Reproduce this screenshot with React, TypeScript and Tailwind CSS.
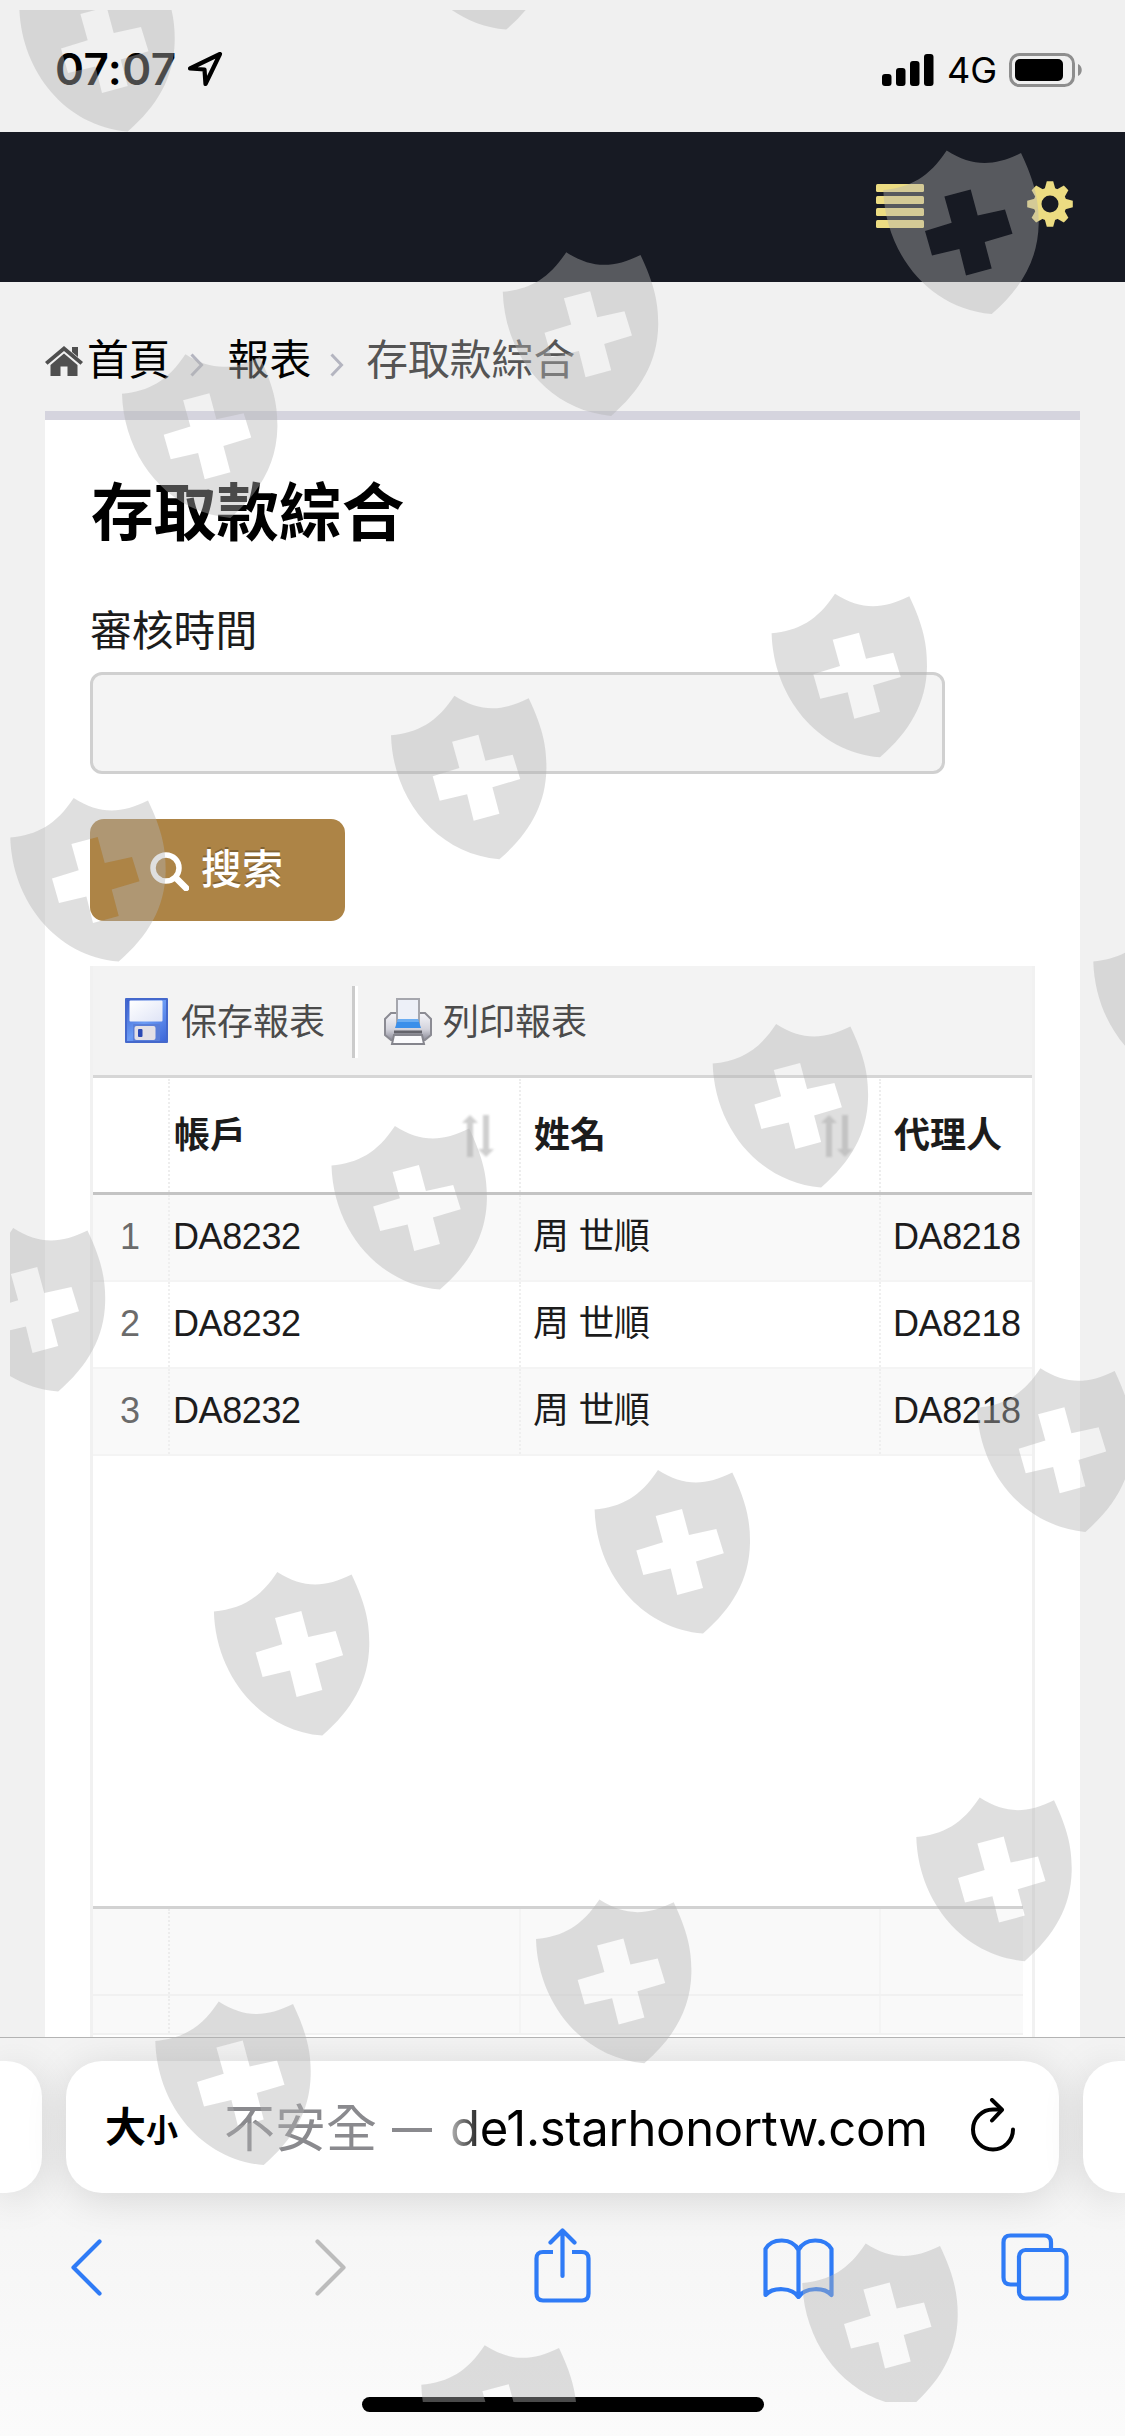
import React from 'react';

interface ReportRow {
    account: string;
    name: string;
    agent: string;
}

const rows: ReportRow[] = [
    { account: 'DA8232', name: '周 世順', agent: 'DA8218' },
    { account: 'DA8232', name: '周 世順', agent: 'DA8218' },
    { account: 'DA8232', name: '周 世順', agent: 'DA8218' }
];

const shields: [number, number][] = [
    [19, -32], [397.5, -134],
    [883, 150.5], [502.5, 252.3], [121.7, 354.3],
    [771.3, 593.7], [390.7, 695.7], [10, 798],
    [1093, 922], [712.4, 1024], [331.2, 1126], [-50.5, 1228],
    [976.7, 1368.3], [594.3, 1470], [213.6, 1572],
    [916, 1797.6], [535.7, 1899.6], [155, 2001.5],
    [802, 2243.5], [421, 2345.3]
];

const gearTeeth = [0, 45, 90, 135, 180, 225, 270, 315];

const ShieldOverlay: React.FC = () => (
    <svg className="absolute top-0 left-0 pointer-events-none" width="1125" height="2436" viewBox="0 0 1125 2436">
        <clipPath id="overlay-area">
            <rect x="10" y="10" width="1115" height="2392" />
        </clipPath>
        <g clipPath="url(#overlay-area)" fill="#b2b2b2" fillOpacity="0.416" fillRule="evenodd">
            {shields.map(([x, y], index) => (
                <path
                    key={index}
                    transform={`translate(${x} ${y})`}
                    d="M0.3 39.5C27 37 46 27 63.7 0C89 16 110 16.500 138 2.600C152 32 156 51 155.700 73C155 110 138 138 108.700 163.600C45 158 2 102 0.300 39.500ZM61.400 46L87.700 39L94.700 65L122 59L129.500 83.300L101.700 91.600L108.700 118L83 125L76.400 98.600L49 105L42 80.500L68.700 72.300Z"
                />
            ))}
        </g>
    </svg>
);

const StatusBar: React.FC = () => (
    <div className="flex h-[132px] shrink-0 items-start justify-between bg-[#f0f0f0] pt-[47px] pr-[42px] pl-[55px] font-['Inter',sans-serif]">
        <div className="flex items-center">
            <span className="w-[122px] text-[44px] leading-[44px] font-semibold tracking-[0.4px] whitespace-nowrap">07:07</span>
            <svg className="ml-[9px]" width="38" height="38" viewBox="0 0 38 38" fill="none" stroke="#000" strokeWidth="4.200" strokeLinejoin="round">
                <path d="M34 4L4 18.500L18.500 19.500L19.500 34Z" />
            </svg>
        </div>
        <div className="flex items-center">
            <svg width="52" height="44" viewBox="0 0 52 44">
                <rect x="0" y="26" width="9.500" height="12" rx="3" />
                <rect x="14" y="20" width="9.500" height="18" rx="3" />
                <rect x="28" y="13" width="9.500" height="25" rx="3" />
                <rect x="42" y="6" width="9.500" height="32" rx="3" />
            </svg>
            <span className="mt-px ml-[13px] w-[62px] text-[36px] leading-[44px]">4G</span>
            <svg width="74" height="44" viewBox="0 0 74 44">
                <rect x="1.500" y="6.500" width="63" height="31" rx="9" fill="none" stroke="#8e8e8e" strokeWidth="3" />
                <rect x="6" y="11" width="48" height="22" rx="5" />
                <path d="M69 16C74 18 74 26 69 28Z" fill="#8e8e8e" />
            </svg>
        </div>
    </div>
);

const Header: React.FC = () => (
    <header className="flex h-[150px] shrink-0 items-start justify-end bg-[#171a23] pt-[49px] pr-[52px]">
        <svg className="mt-[3px]" width="48" height="44" viewBox="0 0 48 44" fill="#ecdc82">
            <rect y="0" width="48" height="8" rx="1.500" />
            <rect y="12" width="48" height="8" rx="1.500" />
            <rect y="24" width="48" height="8" rx="1.500" />
            <rect y="36" width="48" height="8" rx="1.500" />
        </svg>
        <svg className="ml-[103px]" width="46" height="46" viewBox="-23 -23 46 46" fill="#ecdc82">
            <circle r="12.500" fill="none" stroke="#ecdc82" strokeWidth="8" />
            {gearTeeth.map((angle) => (
                <path key={angle} transform={`rotate(${angle})`} d="M-5.500 -14.500L-3.200 -22.800H3.200L5.500 -14.500Z" />
            ))}
        </svg>
    </header>
);

const Chevron: React.FC = () => (
    <svg width="14" height="24" viewBox="0 0 14 24" fill="none" stroke="#b4b5c0" strokeWidth="3">
        <path d="M1.500 1.500L11.500 12L1.500 22.500" />
    </svg>
);

const Breadcrumb: React.FC = () => (
    <nav className="flex h-[129px] items-center pt-[29px] pl-[45px] text-[41.800px] leading-[60px] text-black">
        <svg width="38" height="31" viewBox="0 0 38 31" fill="#4f4f4f">
            <path d="M27 1H33V11L27 6Z" />
            <path d="M19 0L38 16L35.500 18.800L19 5L2.500 18.800L0 16Z" />
            <path d="M19 7.500L32.500 19V30H22.500V20.500H15.500V30H5.500V19Z" />
        </svg>
        <span className="ml-[4px]">首頁</span>
        <span className="mt-[7px] ml-[19px]"><Chevron /></span>
        <span className="ml-[24px]">報表</span>
        <span className="mt-[7px] ml-[19px]"><Chevron /></span>
        <span className="ml-[22px] text-[#555]">存取款綜合</span>
    </nav>
);

const SaveIcon: React.FC = () => (
    <svg width="43" height="46" viewBox="0 0 43 46">
        <defs>
            <linearGradient id="disk" x1="0" y1="0" x2="1" y2="1">
                <stop offset="0" stopColor="#3a5fce" />
                <stop offset="0.500" stopColor="#6b9bf4" />
                <stop offset="1" stopColor="#3c66d8" />
            </linearGradient>
            <linearGradient id="label" x1="0" y1="0" x2="1" y2="1">
                <stop offset="0" stopColor="#fff" />
                <stop offset="1" stopColor="#dfe4f6" />
            </linearGradient>
        </defs>
        <rect width="43" height="45" rx="1" fill="#4468cc" />
        <rect x="2" y="2" width="39" height="41" fill="url(#disk)" />
        <rect x="4.500" y="2.500" width="33" height="21" rx="1" fill="url(#label)" />
        <rect x="8" y="26" width="27" height="17" rx="1" fill="#5a7ed8" />
        <rect x="9.500" y="28" width="21" height="14" rx="2" fill="#e3e0e6" />
        <rect x="13" y="31" width="4.500" height="8" rx="1" fill="#2b49b4" />
    </svg>
);

const PrintIcon: React.FC = () => (
    <svg width="48" height="48" viewBox="0 0 48 48">
        <defs>
            <linearGradient id="printer" x1="0" y1="0" x2="0" y2="1">
                <stop offset="0" stopColor="#f6f6fa" />
                <stop offset="0.600" stopColor="#d3d3dc" />
                <stop offset="1" stopColor="#8b8b97" />
            </linearGradient>
        </defs>
        <path d="M7 15H41L47 21V37L41 42H7L1 37V21Z" fill="url(#printer)" stroke="#8b8b93" strokeWidth="2" />
        <path d="M13 1H35V27H13Z" fill="#edf0f8" stroke="#a5a6ad" strokeWidth="2" />
        <path d="M14 21H34L37 30H11Z" fill="#3b8fea" />
        <path d="M14 21H34L35 24H13Z" fill="#6badf2" />
        <path d="M10 34H38" stroke="#64646c" strokeWidth="3" />
        <path d="M10 37H38L40 46H8Z" fill="#fbfbfd" stroke="#85858d" strokeWidth="2" />
    </svg>
);

const SortIcon: React.FC = () => (
    <svg className="blur-[1px]" width="32" height="42" viewBox="0 0 32 42" fill="#cfcfcf">
        <path d="M8 0L16 8H11V42H5V8H0Z" />
        <path d="M24 42L16 34H21V0H27V34H32Z" />
    </svg>
);

const ReportGrid: React.FC = () => (
    <div className="mt-[45px] flex h-[1080px] w-[945px] flex-col border-x-3 border-[#f1f1f1] text-[36px] text-[#1c1c1c]">
        <div className="flex h-[109px] shrink-0 items-start bg-[#f3f3f3] pt-[20px] text-[#4b4b4b]">
            <div className="mt-[12px] ml-[32px]"><SaveIcon /></div>
            <span className="mt-[11px] ml-[13px] leading-[52px]">保存報表</span>
            <span className="ml-[27px] h-[72px] w-[6px] border-l-3 border-[#cbcbcb] bg-white" />
            <div className="mt-[12px] ml-[26px]"><PrintIcon /></div>
            <span className="mt-[11px] ml-[11px] leading-[52px]">列印報表</span>
        </div>
        <div className="grid h-[120px] shrink-0 grid-cols-[75px_351px_360px_1fr] border-t-3 border-b-3 border-t-[#d6d6d6] border-b-[#c4c4c4] pt-px font-bold leading-[113px]">
            <div />
            <div className="flex items-center border-l-2 border-dotted border-[#ededed] pl-[4px]">
                帳戶
                <span className="mr-[25px] ml-auto"><SortIcon /></span>
            </div>
            <div className="flex items-center border-l-2 border-dotted border-[#ededed] pl-[13px]">
                姓名
                <span className="mr-[26px] ml-auto"><SortIcon /></span>
            </div>
            <div className="border-l-2 border-dotted border-[#ededed] pl-[13px]">代理人</div>
        </div>
        {rows.map((row, index) => (
            <div
                key={index}
                className="grid h-[87px] shrink-0 grid-cols-[75px_351px_360px_1fr] border-b-2 border-[#f4f4f4] leading-[84px] nth-[3]:bg-[#f9f9f9] nth-[4]:bg-white nth-[5]:bg-[#f9f9f9]"
            >
                <div className="pr-px text-center text-[#6b6b6b]">{index + 1}</div>
                <div className="border-l-2 border-dotted border-[#efefef] pl-[3px] tracking-[-0.4px]">{row.account}</div>
                <div className="border-l-2 border-dotted border-[#efefef] pl-[12px] tracking-[-0.3px]">{row.name}</div>
                <div className="border-l-2 border-dotted border-[#efefef] pl-[12px] tracking-[-0.4px]">{row.agent}</div>
            </div>
        ))}
        <div className="h-[450px] shrink-0" />
        {/* totals area, cut off by the browser toolbar */}
        <div className="mr-[9px] border-t-3 border-[#d2d2d2] bg-[#f9f9f9]">
            <div className="grid h-[87px] grid-cols-[75px_351px_360px_1fr] border-b-2 border-[#f1f1f1]">
                <div />
                <div className="border-l-2 border-dotted border-[#ececec]" />
                <div className="border-l-2 border-[#f4f4f4]" />
                <div className="border-l-2 border-[#f4f4f4]" />
            </div>
            <div className="grid h-[39px] grid-cols-[75px_351px_360px_1fr] border-b-2 border-[#f1f1f1]">
                <div />
                <div className="border-l-2 border-dotted border-[#ececec]" />
                <div className="border-l-2 border-[#f4f4f4]" />
                <div className="border-l-2 border-[#f4f4f4]" />
            </div>
        </div>
    </div>
);

const ReportPanel: React.FC = () => (
    <section className="mx-[45px] h-[1700px] border-t-9 border-[#d5d4de] bg-white pt-[48px] pl-[45px]">
        <h1 className="ml-px text-[62.700px] leading-[90px] font-bold text-black">存取款綜合</h1>
        <label className="mt-[44px] block text-[41.800px] leading-[60px] text-[#1c1c1c]">審核時間</label>
        <div className="mt-[10px] h-[102px] w-[855px] rounded-[12px] border-3 border-[#d0d0d0] bg-[#f4f4f4]" />
        <button className="mt-[45px] flex h-[102px] w-[255px] items-center rounded-[14px] bg-[#ad8446] pl-[60px] text-[41px] font-medium text-white [text-shadow:0_-2px_0_rgba(0,0,0,0.25)]">
            <svg className="mt-[2px]" width="39" height="39" viewBox="0 0 39 39" fill="none" stroke="#fff">
                <circle cx="16" cy="16" r="13" strokeWidth="5.500" />
                <path d="M26 26L36 36" strokeWidth="6.500" strokeLinecap="round" />
            </svg>
            <span className="mt-[2px] ml-[12px]">搜索</span>
        </button>
        <ReportGrid />
    </section>
);

const BrowserBar: React.FC = () => (
    <footer className="flex h-[399px] shrink-0 flex-col overflow-hidden border-t border-[#b3b3b3] bg-linear-to-b from-[#f3f3f3] via-[#f6f6f6] to-[#fbfbfb] pt-[23px]">
        <div className="flex h-[132px] shrink-0 justify-between">
            <div className="w-[42px] rounded-r-[36px] bg-white shadow-[0_6px_40px_rgba(0,0,0,0.13)]" />
            <div className="flex w-[993px] items-center rounded-[36px] bg-white pl-[39px] font-['Inter','Noto_Sans_CJK_TC',sans-serif] shadow-[0_6px_40px_rgba(0,0,0,0.13)]">
                <span className="mt-[4px] flex w-[119px] items-baseline leading-[60px] whitespace-nowrap">
                    <span className="text-[41px] font-bold">大</span>
                    <span className="text-[32px] font-bold">小</span>
                </span>
                <span className="mt-[3px] w-[168px] text-[51px] leading-[60px] whitespace-nowrap text-[#8a8a8e]">不安全</span>
                <span className="mt-[6px] h-[4px] w-[40px] bg-[#8a8a8e]" />
                <span className="mt-[3px] ml-[18px] w-[500px] text-[49px] leading-[60px] tracking-[-0.3px] whitespace-nowrap text-black">
                    <span className="bg-linear-to-r from-[#b8b8b8] to-[#222] bg-clip-text text-transparent">d</span>e1.starhonortw.com
                </span>
                <svg className="mb-[4px] ml-[20px]" width="46" height="54" viewBox="0 0 46 54" fill="none" stroke="#000" strokeWidth="4" strokeLinecap="round" strokeLinejoin="round">
                    <path d="M43 31.500A20 20 0 1 1 23 11.500H31" />
                    <path d="M22 2L32 11.800L22 22.500" />
                </svg>
            </div>
            <div className="w-[42px] rounded-l-[36px] bg-white shadow-[0_6px_40px_rgba(0,0,0,0.13)]" />
        </div>
        <div className="mt-[34px] flex h-[80px] shrink-0 items-center pl-[71px]">
            <svg width="31" height="57" viewBox="0 0 31 57" fill="none" stroke="#2f7bf6" strokeWidth="4.200" strokeLinecap="round" strokeLinejoin="round">
                <path d="M28.500 2.500L2.500 28.500L28.500 54.500" />
            </svg>
            <svg className="ml-[213px]" width="31" height="57" viewBox="0 0 31 57" fill="none" stroke="#bcbcbc" strokeWidth="4.200" strokeLinecap="round" strokeLinejoin="round">
                <path d="M2.500 2.500L28.500 28.500L2.500 54.500" />
            </svg>
            <svg className="mb-[3px] ml-[188px]" width="57" height="75" viewBox="0 0 57 75" fill="none" stroke="#2f7bf6" strokeWidth="4.200" strokeLinecap="round" strokeLinejoin="round">
                <path d="M28.500 48V3M16.500 14.500L28.500 2.500L40.500 14.500" />
                <path strokeLinecap="butt" d="M19 24H9Q2.500 24 2.500 30.500V65.500Q2.500 72.500 9 72.500H48Q54.500 72.500 54.500 65.500V30.500Q54.500 24 48 24H38" />
            </svg>
            <svg className="mt-[3px] ml-[172px]" width="71" height="61" viewBox="0 0 71 61" fill="none" stroke="#2f7bf6" strokeWidth="4.200" strokeLinecap="round" strokeLinejoin="round">
                <path d="M35.500 12C29 -0.500 9 -0.500 2.500 11V57C10 49 29 49 35.500 59C42 49 61 49 68.500 57V11C62 -0.500 42 -0.500 35.500 12V58" />
            </svg>
            <svg className="ml-[167px]" width="68" height="69" viewBox="0 0 68 69" fill="none" stroke="#2f7bf6" strokeWidth="4.200">
                <path d="M16 51.500H9.500Q2.500 51.500 2.500 44.500V9.500Q2.500 2.500 9.500 2.500H43Q50 2.500 50 9.500V16" />
                <rect x="18" y="17" width="47.500" height="48.500" rx="6.500" />
            </svg>
        </div>
        <div className="mt-[90px] ml-[362px] h-[15px] w-[402px] shrink-0 rounded-full bg-black" />
    </footer>
);

const App: React.FC = () => {
    return (
        <div className="relative flex h-[2436px] w-[1125px] flex-col overflow-hidden bg-[#f1f1f1] font-['Liberation_Sans','Noto_Sans_CJK_TC',sans-serif]">
            <StatusBar />
            <Header />
            <main className="h-[1755px] shrink-0 overflow-hidden">
                <Breadcrumb />
                <ReportPanel />
            </main>
            <BrowserBar />
            <ShieldOverlay />
        </div>
    );
};

export default App;
